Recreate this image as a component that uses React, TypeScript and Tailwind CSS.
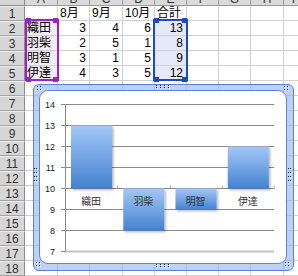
const COLS = [
  { l: "A", w: "w-[33px]" },
  { l: "B", w: "w-[32px]" },
  { l: "C", w: "w-[33px]" },
  { l: "D", w: "w-[32px]" },
  { l: "E", w: "w-[32px]" },
  { l: "F", w: "w-[32px]" },
  { l: "G", w: "w-[32px]" },
  { l: "H", w: "w-[33px]" },
  { l: "I", w: "w-[20px]" },
];

const ROWS = Array.from({ length: 18 }, (_, i) => i + 1);

// cell text; numbers get right aligned
const DATA: Record<string, string> = {
  B1: "8月", C1: "9月", D1: "10月", E1: "合計",
  A2: "織田", B2: "3", C2: "4", D2: "6", E2: "13",
  A3: "羽柴", B3: "2", C3: "5", D3: "1", E3: "8",
  A4: "明智", B4: "3", C4: "1", D4: "5", E4: "9",
  A5: "伊達", B5: "4", C5: "3", D5: "5", E5: "12",
};

const PURPLE = ["A2", "A3", "A4", "A5"];
const BLUE = ["E2", "E3", "E4", "E5"];

const yOf = (v: number) => Math.round(13 + (14 - v) * 21.07) + 0.5;

const BARS = [
  { name: "織田", v: 13 },
  { name: "羽柴", v: 8 },
  { name: "明智", v: 9 },
  { name: "伊達", v: 12 },
];

function Dots({ pts, w, h }: { pts: [number, number][]; w: number; h: number }) {
  return (
    <svg width={w} height={h} className="block">
      {pts.map(([x, y], i) => (
        <g key={i}>
          <rect x={x + 1} y={y + 1} width="1" height="1" fill="#ffffff" />
          <rect x={x} y={y} width="1" height="1" fill="#14224a" />
        </g>
      ))}
    </svg>
  );
}

const CORNER: [number, number][] = [[0, 0], [3, 0], [0, 3], [3, 3]];
const HORIZ: [number, number][] = [[0, 0], [4, 0], [8, 0], [12, 0], [0, 2], [4, 2], [8, 2], [12, 2]];
const VERT: [number, number][] = [[0, 0], [0, 4], [0, 8], [0, 12], [2, 0], [2, 4], [2, 8], [2, 12]];

const Corner = () => <Dots pts={CORNER} w={6} h={6} />;
const Horiz = () => <Dots pts={HORIZ} w={15} h={5} />;
const Vert = () => <Dots pts={VERT} w={5} h={15} />;

function Chart() {
  const left = 25;
  const right = 234;
  const catW = (right - left) / 4;
  return (
    <svg width="246" height="172" className="block font-['Liberation_Sans','Noto_Sans_CJK_JP',sans-serif]">
      <defs>
        <linearGradient id="barFill" x1="0" y1="0" x2="0" y2="1">
          <stop offset="0" stopColor="#a3c7f7" />
          <stop offset="1" stopColor="#4482d0" />
        </linearGradient>
        <filter id="barShadow" x="-20%" y="-20%" width="150%" height="150%">
          <feDropShadow dx="1.5" dy="1.5" stdDeviation="1" floodColor="#000" floodOpacity="0.3" />
        </filter>
      </defs>

      {/* gridlines + value axis */}
      {[14, 13, 12, 11, 10, 9, 8].map((v) => (
        <g key={v}>
          <line x1={21} x2={right} y1={yOf(v)} y2={yOf(v)} stroke="#8a8a8a" />
          <text x={15} y={yOf(v) + 3.5} textAnchor="end" fontSize="9" fill="#222">
            {v}
          </text>
        </g>
      ))}
      <line x1={21} x2={25} y1={yOf(7)} y2={yOf(7)} stroke="#8a8a8a" />
      <line x1={left} x2={right} y1={yOf(7)} y2={yOf(7)} stroke="#c2c2c2" strokeWidth="2" />
      <text x={15} y={yOf(7) + 3.5} textAnchor="end" fontSize="9" fill="#222">
        7
      </text>
      <line x1={25.5} x2={25.5} y1={yOf(14)} y2={yOf(7)} stroke="#8a8a8a" />

      {/* bars, baseline at 10 */}
      {BARS.map((b, i) => {
        const x = left + i * catW + 6;
        const y1 = Math.min(yOf(b.v), yOf(10));
        const y2 = Math.max(yOf(b.v), yOf(10));
        return (
          <rect key={b.name} x={x} y={y1} width={41} height={y2 - y1} fill="url(#barFill)" filter="url(#barShadow)" />
        );
      })}

      {[0, 1, 2, 3, 4].map((i) => (
        <line
          key={i}
          x1={Math.round(left + i * catW) + 0.5}
          x2={Math.round(left + i * catW) + 0.5}
          y1={yOf(10) - 3}
          y2={yOf(10)}
          stroke="#b0b0b0"
        />
      ))}

      {BARS.map((b, i) => (
        <text key={b.name} x={left + i * catW + catW / 2} y={114} textAnchor="middle" fontSize="10" fill="#333">
          {b.name}
        </text>
      ))}
    </svg>
  );
}

function Handle({ color }: { color: string }) {
  return <div className={`w-[5px] h-[5px] ${color}`} />;
}

function Selection({ box, bg, pos }: { box: string; bg: string; pos: string }) {
  return (
    <div className={`absolute ${pos} flex flex-col justify-between`}>
      <div className={`absolute inset-x-0 top-[1px] bottom-[1px] border-2 ${box}`} />
      <div className="relative flex justify-between px-[1px]">
        <Handle color={bg} />
        <Handle color={bg} />
      </div>
      <div className="relative flex justify-between px-[1px]">
        <Handle color={bg} />
        <Handle color={bg} />
      </div>
    </div>
  );
}

export default function App() {
  return (
    <div className="relative w-[298px] h-[276px] overflow-hidden bg-white font-['Liberation_Sans','Noto_Sans_CJK_JP',sans-serif] text-[12px] text-black">
      {/* column headers, cut off at the top */}
      <div className="flex h-[6px]">
        <div className="w-[25px] shrink-0 bg-[#d6d6d6] border-r border-b border-[#8c8c8c]" />
        {COLS.map((c) => (
          <div
            key={c.l}
            className={`${c.w} shrink-0 overflow-hidden bg-[#dadada] border-r border-b border-[#9a9a9a] text-center text-[#333]`}
          >
            <div className="-mt-[7px] leading-[12px]">{c.l}</div>
          </div>
        ))}
      </div>

      {ROWS.map((r) => (
        <div key={r} className="flex h-[15px]">
          <div className="w-[25px] shrink-0 flex items-center justify-center bg-[#d6d6d6] border-t border-t-[#ececec] border-r border-r-[#8c8c8c] border-b border-b-[#a4a4a4] text-[#333] leading-none">
            {r}
          </div>
          {COLS.map((c) => {
            const id = `${c.l}${r}`;
            const t = DATA[id];
            const num = t !== undefined && /^\d+$/.test(t);
            const tint = PURPLE.includes(id)
              ? "bg-[#f3ebf5]"
              : BLUE.includes(id)
              ? "bg-[#e6e9f8]"
              : "bg-white";
            return (
              <div
                key={id}
                className={`${c.w} shrink-0 flex items-center overflow-hidden whitespace-nowrap border-r border-b border-[#d0d0d0] leading-none ${tint} ${
                  num ? "justify-end pr-[3px]" : "justify-start pl-[2px]"
                }`}
              >
                {t}
              </div>
            );
          })}
        </div>
      ))}

      <Selection pos="left-[25px] top-[18px] w-[34px] h-[64px]" box="border-[#9b22c9]" bg="bg-[#9b22c9]" />
      <Selection pos="left-[153px] top-[18px] w-[35px] h-[64px]" box="border-[#1f47c9]" bg="bg-[#1f47c9]" />

      {/* chart object */}
      <div className="absolute left-[33px] top-[84px] w-[261px] h-[187px] flex rounded-[6px] border border-[#5b80da] bg-[#8fb2ee]/60 pl-[5px] pt-[5px] pr-[6px] pb-[6px]">
        <div className="flex-1 rounded-[9px] border border-[#5f83da] bg-white overflow-hidden">
          <Chart />
        </div>

        {/* resize grips */}
        <div className="absolute inset-0 flex flex-col justify-between pointer-events-none">
          <div className="flex justify-between items-start px-[3px] pt-[1px]">
            <Corner />
            <div className="-mt-[1px]"><Horiz /></div>
            <Corner />
          </div>
          <div className="flex justify-between px-[0px] -mt-[3px]">
            <Vert />
            <Vert />
          </div>
          <div className="flex justify-between items-end px-[2px] pb-[2px]">
            <Corner />
            <div className="-mb-[1px]"><Horiz /></div>
            <Corner />
          </div>
        </div>
      </div>
    </div>
  );
}
